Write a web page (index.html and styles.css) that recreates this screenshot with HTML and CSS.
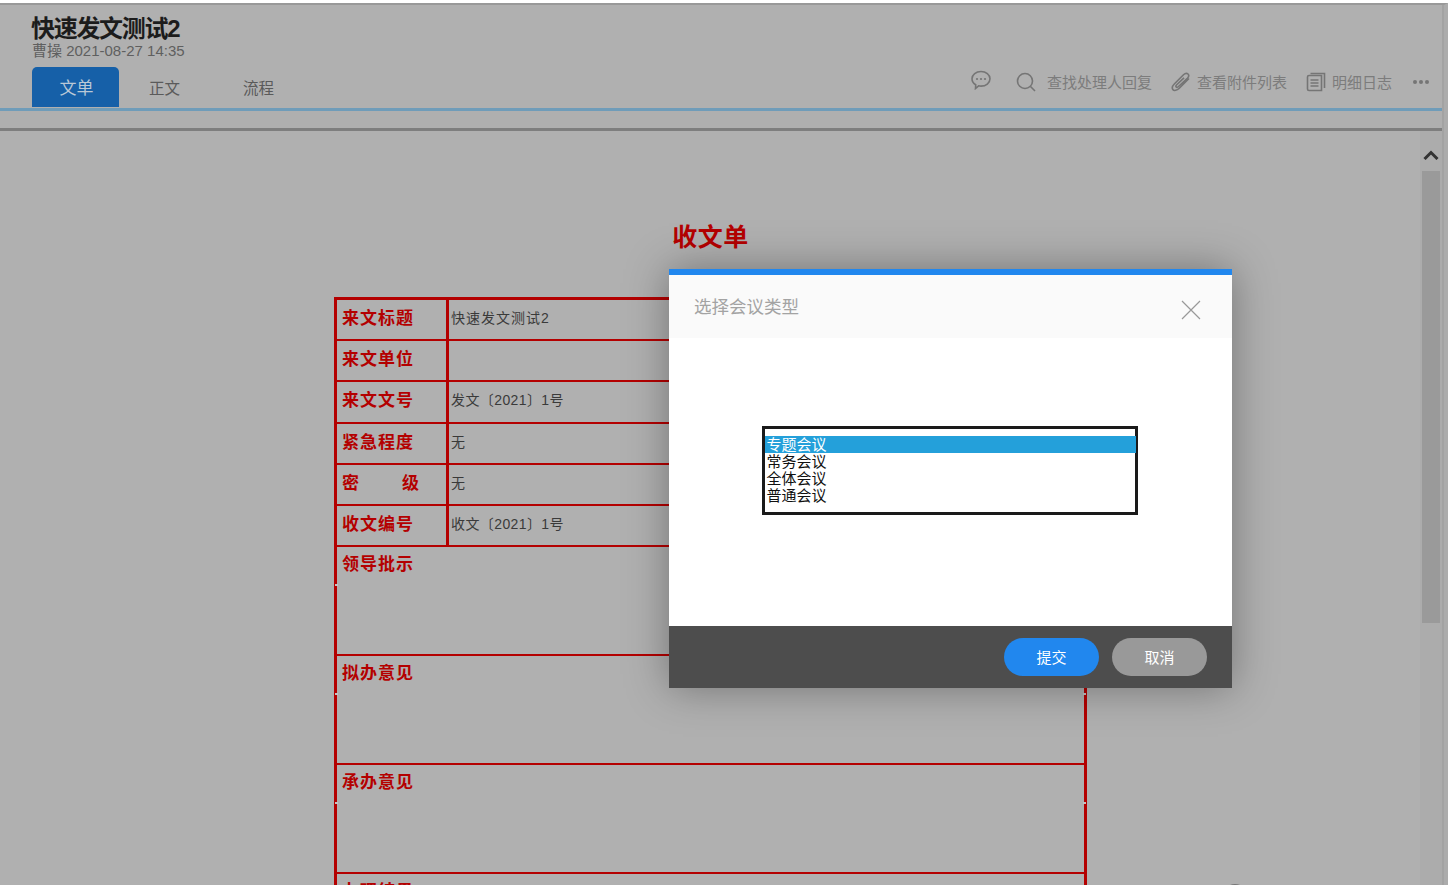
FILE: index.html
```html
<!DOCTYPE html>
<html lang="zh-CN">
<head>
    <meta charset="UTF-8">
    <meta name="viewport" content="width=device-width, initial-scale=1.0">
    <title>快速发文测试2</title>
    <link rel="stylesheet" href="styles.css">
</head>
<body>
    <div class="topStrip"></div>
    <div class="page">
        <div class="pageIn">
            <div class="head">
                <h1 class="title">快速发文测试2</h1>
                <div class="meta">曹操 2021-08-27 14:35</div>
                <div class="tabBar">
                    <div class="tabs">
                        <div class="tab active">文单</div>
                        <div class="tab">正文</div>
                        <div class="tab">流程</div>
                    </div>
                    <div class="tools">
                        <svg class="toolIcon chat" viewBox="0 0 20 20" width="20" height="20">
                            <path d="M10 1.500c4.900 0 9 3.100 9 7.300s-4.100 7.300-9 7.300c-.8 0-1.600-.1-2.400-.3L4.500 18.500l.2-3.700C2.400 13.500 1 11.300 1 8.800 1 4.600 5.100 1.500 10 1.500z"/>
                            <circle class="dot" cx="6" cy="9" r="1.100"/>
                            <circle class="dot" cx="10" cy="9" r="1.100"/>
                            <circle class="dot" cx="14" cy="9" r="1.100"/>
                        </svg>
                        <div class="tool search">
                            <svg class="toolIcon" viewBox="0 0 20 20" width="20" height="20">
                                <circle cx="9" cy="9" r="7.500"/>
                                <path d="M14.500 14.500l4.500 4.500"/>
                            </svg>
                            <span>查找处理人回复</span>
                        </div>
                        <div class="tool">
                            <svg class="toolIcon" viewBox="0 0 20 20" width="20" height="20">
                                <path d="M18 6.500L8 16.500c-2 2-5 2.500-6 1.200-1.200-1.500-.5-4 1.500-6L12.500 2.800c1.500-1.500 3.500-1.800 4.500-.8 1 1 .8 2.800-.7 4.300L7.500 14.500c-.8.8-1.800 1-2.300.5-.5-.5-.3-1.400.5-2.200L13 5.800"/>
                            </svg>
                            <span>查看附件列表</span>
                        </div>
                        <div class="tool">
                            <svg class="toolIcon" viewBox="0 0 20 20" width="20" height="20">
                                <path d="M3 3.500h12.500v15H3c-1 0-1.500-.5-1.500-1.500V5c0-1 .5-1.500 1.500-1.500z"/>
                                <path d="M4.500 1.500h14v14.500"/>
                                <path d="M4.500 8h8M4.500 11h8M4.500 14h8"/>
                            </svg>
                            <span>明细日志</span>
                        </div>
                        <div class="more"><i></i><i></i><i></i></div>
                    </div>
                </div>
            </div>
            <div class="band"></div>
            <div class="docArea">
                <div class="doc">
                    <h2 class="docTitle">收文单</h2>
                    <table class="form">
                        <tr class="row">
                            <th>来文标题</th>
                            <td>快速发文测试2</td>
                        </tr>
                        <tr class="row">
                            <th>来文单位</th>
                            <td></td>
                        </tr>
                        <tr class="row tall">
                            <th>来文文号</th>
                            <td class="docNo">发文〔2021〕1号</td>
                        </tr>
                        <tr class="row">
                            <th>紧急程度</th>
                            <td>无</td>
                        </tr>
                        <tr class="row">
                            <th class="spread">密<span>级</span></th>
                            <td>无</td>
                        </tr>
                        <tr class="row">
                            <th>收文编号</th>
                            <td class="docNo">收文〔2021〕1号</td>
                        </tr>
                        <tr class="bigRow">
                            <th colspan="2">领导批示</th>
                        </tr>
                        <tr class="bigRow">
                            <th colspan="2">拟办意见</th>
                        </tr>
                        <tr class="bigRow">
                            <th colspan="2">承办意见</th>
                        </tr>
                        <tr class="bigRow">
                            <th colspan="2">办理结果</th>
                        </tr>
                    </table>
                </div>
                <div class="scroll">
                    <svg class="scrollUp" viewBox="0 0 16 10" width="16" height="10">
                        <path d="M1.500 9L8 2.500 14.500 9"/>
                    </svg>
                    <div class="thumb"></div>
                </div>
            </div>
        </div>
    </div>

    <div class="modal">
        <div class="modalHead">
            <span>选择会议类型</span>
            <svg class="close" viewBox="0 0 20 20" width="20" height="20">
                <path d="M1 1l18 18M19 1L1 19"/>
            </svg>
        </div>
        <div class="modalBody">
            <div class="listBox">
                <div class="opt selected">专题会议</div>
                <div class="opt">常务会议</div>
                <div class="opt">全体会议</div>
                <div class="opt">普通会议</div>
            </div>
        </div>
        <div class="modalFoot">
            <button class="btn submit">提交</button>
            <button class="btn cancel">取消</button>
        </div>
    </div>
    <div class="peek"></div>
</body>
</html>
```

FILE: styles.css
```css
*{
    box-sizing: border-box;
}
html,body{
    margin: 0;
    height: 100%;
    overflow: hidden;
}
body{
    background: #b0b0b0;
    font-family: "Liberation Sans", "Noto Sans CJK SC", sans-serif;
    color: #666;
}
.topStrip{
    height: 3px;
    background: #fff;
}
.page{
    height: 882px;
    border-top: 2px solid #999;
    border-right: 4px solid #acacac;
}
.pageIn{
    height: 100%;
    border-right: 2px solid #a3a3a3;
    display: flex;
    flex-direction: column;
}

/* head */
.head{
    height: 106px;
    border-bottom: 3px solid #6f9cb9;
    padding: 9px 0 0 32px;
}
.title{
    margin: 0 0 0 -1px;
    font-size: 24px;
    line-height: 30px;
    font-weight: bold;
    letter-spacing: -1.300px;
    color: #1c1c1c;
}
.meta{
    font-size: 15px;
    line-height: 13px;
    color: #5f5f5f;
}
.tabBar{
    display: flex;
    justify-content: space-between;
    margin-top: 10px;
}
.tabs{
    display: flex;
}
.tab{
    width: 91px;
    height: 40px;
    padding-top: 10px;
    text-align: center;
    font-size: 15.500px;
    line-height: 24px;
    color: #5a5a5a;
}
.tab:last-child{
    width: 97px;
}
.tab.active{
    width: 87px;
    background: #1660a8;
    border-radius: 5px 5px 0 0;
    padding: 10px 0 0 2px;
    font-size: 17px;
    color: #b9c8d6;
}
.tools{
    display: flex;
    align-items: center;
    height: 30px;
    padding-right: 13px;
    font-size: 15px;
    color: #7c7c7c;
}
.tool{
    display: flex;
    align-items: center;
    gap: 6px;
    margin-right: 19px;
}
.tool span{
    position: relative;
    top: -1px;
}
.tool:nth-last-child(2){
    margin-right: 21px;
}
.search{
    gap: 11px;
    margin-left: 25px;
}
.toolIcon{
    flex: none;
    fill: none;
    stroke: #757575;
    stroke-width: 1.600;
}
.chat{
    margin-top: -5px;
}
.dot{
    fill: #757575;
    stroke: none;
}
.more{
    display: flex;
    gap: 2px;
    margin-top: -1px;
}
.more i{
    width: 4px;
    height: 4px;
    border-radius: 50%;
    background: #757575;
}

.band{
    height: 20px;
    background: #afafaf;
    border-bottom: 3px solid #7e7e7e;
}

/* doc */
.docArea{
    flex: 1;
    display: flex;
    min-height: 0;
    overflow: hidden;
}
.doc{
    flex: 1;
    padding: 88px 0 0 334px;
}
.docTitle{
    width: 753px;
    margin: 0 0 42px;
    text-align: center;
    font-size: 25px;
    line-height: 36px;
    letter-spacing: .5px;
    color: #b40000;
}
.form{
    width: 753px;
    table-layout: fixed;
    border-collapse: collapse;
    border: 3px solid #b40000;
}
.form th,.form td{
    border: 2px solid #b40000;
    padding: 0 4px 5px 2px;
    text-align: left;
    font-size: 14px;
    font-weight: normal;
    letter-spacing: 1px;
    color: #3a3a3a;
}
.form td.docNo{
    letter-spacing: .4px;
}
.form th{
    width: 112px;
    padding-left: 5px;
    padding-bottom: 6px;
    border-right-width: 3px;
    font-size: 17px;
    font-weight: bold;
    color: #b40000;
}
.row{
    height: 41px;
}
.row.tall{
    height: 42px;
}
.bigRow{
    height: 109px;
}
.bigRow th{
    position: relative;
    vertical-align: top;
    padding-top: 3px;
}
/* small light nicks in the side borders */
.bigRow th::before,.bigRow th::after{
    content: "";
    position: absolute;
    top: 37px;
    width: 3px;
    height: 2px;
    background: #c4c4c4;
}
.bigRow th::before{
    left: -2px;
}
.bigRow th::after{
    right: -2px;
}
.spread span{
    margin-left: 42px;
}

/* scroll */
.scroll{
    width: 22px;
    background: #acacac;
    padding: 19px 2px 0 2px;
}
.scrollUp{
    display: block;
    margin: 0 auto;
    fill: none;
    stroke: #333;
    stroke-width: 3;
}
.thumb{
    height: 452px;
    margin-top: 11px;
    background: #9a9a9a;
}

/* modal */
.modal{
    position: absolute;
    left: 669px;
    top: 269px;
    width: 563px;
    height: 419px;
    border-top: 6px solid #2187ee;
    background: #fff;
    display: flex;
    flex-direction: column;
    box-shadow: 0 0 40px rgba(0,0,0,.35);
}
.modalHead{
    height: 63px;
    background: #fafafa;
    display: flex;
    align-items: center;
    justify-content: space-between;
    padding: 0 31px 0 25px;
    font-size: 17.500px;
    color: #a3a3a3;
}
.modalHead span{
    margin-top: -2px;
}
.close{
    fill: none;
    stroke: #999;
    stroke-width: 1.200;
    margin-top: 6px;
}
.modalBody{
    flex: 1;
    display: flex;
    justify-content: center;
    padding: 88px 2px 0 0;
}
.listBox{
    width: 376px;
    height: 89px;
    border: 3px solid #1a1a1a;
    padding-top: 7px;
}
.opt{
    height: 17px;
    padding-left: 2px;
    margin-right: -1px;
    font-size: 15px;
    line-height: 17px;
    color: #111;
}
.opt.selected{
    background: #24a0da;
    color: #fff;
}
.modalFoot{
    height: 62px;
    background: #4d4d4d;
    display: flex;
    align-items: center;
    justify-content: flex-end;
    gap: 13px;
    padding-right: 25px;
}
.btn{
    width: 95px;
    height: 38px;
    border: none;
    border-radius: 19px;
    padding: 0 0 2px;
    font-family: inherit;
    font-size: 15px;
    color: #fff;
}
.submit{
    background: #2187ee;
}
.cancel{
    background: #999;
}
.peek{
    position: absolute;
    left: 1222px;
    top: 884px;
    width: 26px;
    height: 26px;
    border-radius: 50%;
    background: #777;
}
```
